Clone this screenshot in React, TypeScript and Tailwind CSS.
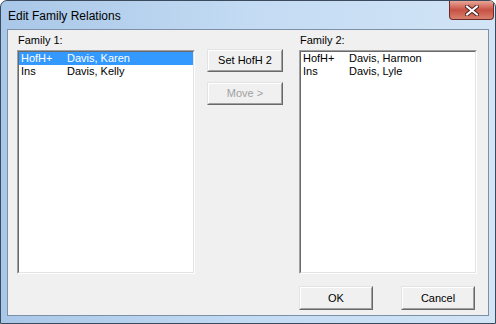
import React from "react";

const rows1 = [
  { code: "HofH+", name: "Davis, Karen", selected: true },
  { code: "Ins", name: "Davis, Kelly", selected: false },
];

const rows2 = [
  { code: "HofH+", name: "Davis, Harmon", selected: false },
  { code: "Ins", name: "Davis, Lyle", selected: false },
];

const ListBox = ({ rows }: { rows: { code: string; name: string; selected: boolean }[] }) => (
  <div className="w-[178px] h-[224px] border border-t-[#a0a0a0] border-l-[#a0a0a0] border-b-white border-r-white">
    <div className="w-full h-full border border-t-[#696969] border-l-[#696969] border-b-[#e3e3e3] border-r-[#e3e3e3] bg-white">
      {rows.map((r) => (
        <div
          key={r.code + r.name}
          className={`flex h-[13px] items-center leading-[13px] pl-[2px] ${r.selected ? "bg-[#3399ff] text-white" : "text-black"}`}
        >
          <span className="w-[46px]">{r.code}</span>
          <span>{r.name}</span>
        </div>
      ))}
    </div>
  </div>
);

const Button = ({
  label,
  w,
  h,
  disabled = false,
}: {
  label: string;
  w: string;
  h: string;
  disabled?: boolean;
}) => (
  <div className={`${w} ${h} border border-t-[#e3e3e3] border-l-[#e3e3e3] border-b-[#696969] border-r-[#696969]`}>
    <div
      className={`w-full h-full flex items-center justify-center bg-[#f0f0f0] border border-t-white border-l-white border-b-[#a0a0a0] border-r-[#a0a0a0] ${disabled ? "text-[#a0a0a0]" : "text-black"}`}
    >
      {label}
    </div>
  </div>
);

export default function App() {
  return (
    <div className="w-[496px] h-[324px] bg-white">
      <div className="w-[496px] h-[324px] flex flex-col rounded-t-[7px] border border-[#3b4a5c] bg-gradient-to-r from-[#a9c7e8] via-[#c3dbf3] to-[#d2e4f6] overflow-hidden">
        {/* title bar */}
        <div className="h-[28px] flex items-start justify-between">
          <span className="mt-[6px] ml-[7px] text-[12px] text-black font-['Liberation_Sans',sans-serif]">
            Edit Family Relations
          </span>
          <div className="mr-[1px] w-[45px] h-[19px] rounded-b-[4px] border border-t-0 border-[#6d2a2a] bg-gradient-to-b from-[#e7a597] via-[#c75044] to-[#d8806e] flex items-center justify-center">
            <svg width="14" height="11" viewBox="0 0 14 11">
              <path
                d="M2 1.5 L12 9.5 M12 1.5 L2 9.5"
                stroke="#4a2020"
                strokeWidth="4"
                strokeLinecap="square"
              />
              <path
                d="M2 1.5 L12 9.5 M12 1.5 L2 9.5"
                stroke="#ffffff"
                strokeWidth="2"
                strokeLinecap="square"
              />
            </svg>
          </div>
        </div>
        {/* client area */}
        <div className="mx-[6px] h-[287px] border border-[#7d90a8] bg-[#f0f0f0] text-[11px] font-['Liberation_Sans',sans-serif] text-black">
          <div className="flex pl-[9px] pt-[2px]">
            <div className="flex flex-col">
              <div className="h-[18px] leading-[16px] pl-[1px]">Family 1:</div>
              <ListBox rows={rows1} />
            </div>
            <div className="flex flex-col ml-[12px] mt-[17px] gap-[10px]">
              <Button label="Set HofH 2" w="w-[76px]" h="h-[23px]" />
              <Button label="Move >" w="w-[76px]" h="h-[23px]" disabled />
            </div>
            <div className="flex flex-col ml-[16px]">
              <div className="h-[18px] leading-[16px] pl-[1px]">Family 2:</div>
              <ListBox rows={rows2} />
            </div>
          </div>
          <div className="flex mt-[12px] ml-[291px] gap-[28px]">
            <Button label="OK" w="w-[74px]" h="h-[24px]" />
            <Button label="Cancel" w="w-[74px]" h="h-[24px]" />
          </div>
        </div>
      </div>
    </div>
  );
}
